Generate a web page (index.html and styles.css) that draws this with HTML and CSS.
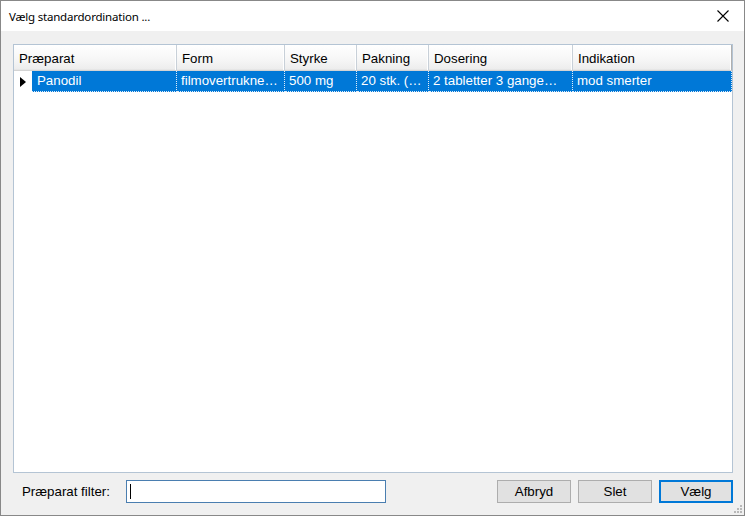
FILE: index.html
```html
<!DOCTYPE html>
<html lang="da">
<head>
<meta charset="utf-8">
<title>Vælg standardordination</title>
<link rel="stylesheet" href="styles.css">
</head>
<body>
<div class="window">
  <div class="titlebar">
    <span class="title">Vælg standardordination ...</span>
    <svg class="close" width="12" height="12" viewBox="0 0 12 12"><path d="M0.5 0.5 L11.5 11.5 M11.5 0.5 L0.5 11.5" stroke="#000" stroke-width="1.1" fill="none"/></svg>
  </div>
  <div class="body">
    <div class="grid">
      <div class="hrow">
        <div class="hcell c1">Præparat</div>
        <div class="hcell c2">Form</div>
        <div class="hcell c3">Styrke</div>
        <div class="hcell c4">Pakning</div>
        <div class="hcell c5">Dosering</div>
        <div class="hcell c6">Indikation</div>
      </div>
      <div class="drow">
        <div class="rowhead"><svg width="6" height="10" viewBox="0 0 6 10"><path d="M0 0 L6 5 L0 10 Z" fill="#000"/></svg></div>
        <div class="dcell d1">Panodil</div>
        <div class="dcell c2">filmovertrukne…</div>
        <div class="dcell c3">500 mg</div>
        <div class="dcell c4">20 stk. (…</div>
        <div class="dcell c5">2 tabletter 3 gange…</div>
        <div class="dcell c6">mod smerter</div>
      </div>
    </div>
    <div class="footer">
      <label class="flabel">Præparat filter:</label>
      <div class="input"><span class="caret"></span></div>
      <div class="spacer"></div>
      <button class="btn">Afbryd</button>
      <button class="btn">Slet</button>
      <button class="btn default">Vælg</button>
    </div>
  </div>
  <svg class="grip" width="9" height="9" viewBox="0 0 9 9">
    <rect x="6" y="0" width="2" height="2" fill="#b8b8b8"/>
    <rect x="3" y="3" width="2" height="2" fill="#b8b8b8"/>
    <rect x="6" y="3" width="2" height="2" fill="#b8b8b8"/>
    <rect x="0" y="6" width="2" height="2" fill="#b8b8b8"/>
    <rect x="3" y="6" width="2" height="2" fill="#b8b8b8"/>
    <rect x="6" y="6" width="2" height="2" fill="#b8b8b8"/>
  </svg>
</div>
</body>
</html>
```

FILE: styles.css
```css
html, body {
  margin: 0;
  padding: 0;
}
body {
  width: 745px;
  height: 516px;
  overflow: hidden;
  font-family: "Liberation Sans", Arial, sans-serif;
  font-size: 13px;
  color: #000;
}
.window {
  position: relative;
  width: 745px;
  height: 516px;
  box-sizing: border-box;
  border: 1px solid #888;
  background: #f0f0f0;
  display: flex;
  flex-direction: column;
}
.titlebar {
  height: 30px;
  background: #fff;
  display: flex;
  align-items: center;
  padding-left: 8px;
  padding-right: 15px;
  flex: none;
}
.title {
  flex: 1;
  font-family: "Noto Sans", "Open Sans", sans-serif;
  font-size: 11.5px;
  letter-spacing: -0.2px;
}
.close {
  display: block;
}
.body {
  flex: 1;
  display: flex;
  flex-direction: column;
  padding: 13px 11px 0 12px;
}
.grid {
  height: 429px;
  box-sizing: border-box;
  border: 1px solid #b4c4d4;
  background: #fff;
  flex: none;
}
.hrow {
  display: flex;
  height: 26px;
}
.hcell {
  box-sizing: border-box;
  height: 26px;
  padding-left: 5px;
  line-height: 27px;
  font-size: 13.3px;
  background: linear-gradient(#ffffff, #f6f6f6 60%, #ececec);
  border-right: 1px solid #c8d0d8;
  border-bottom: 1px solid #d4d4d4;
  box-shadow: inset -1px 0 0 #fff, inset 0 -1px 0 #e6e6e6;
  white-space: nowrap;
  overflow: hidden;
}
.c1 { width: 163px; }
.c2 { width: 108px; }
.c3 { width: 72px; }
.c4 { width: 72px; }
.c5 { width: 144px; }
.c6 { width: 159px; }
.hcell.c6 { border-right: 1px solid #b0b0b0; }
.drow {
  display: flex;
  height: 21px;
}
.rowhead {
  width: 18px;
  box-sizing: border-box;
  display: flex;
  align-items: center;
  padding-left: 6px;
  background: #fff;
}
.rowhead svg { display: block; }
.dcell {
  box-sizing: border-box;
  height: 21px;
  background: #0078d7;
  color: #fff;
  padding-left: 4px;
  line-height: 20px;
  font-size: 13.3px;
  white-space: nowrap;
  overflow: hidden;
  border-right: 1px dotted #e0ecf8;
  border-bottom: 1px dotted #e0ecf8;
}
.d1 { width: 145px; padding-left: 5px; }
.dcell.c2 { width: 108px; }
.footer {
  display: flex;
  align-items: center;
  height: 23px;
  margin-top: 7px;
}
.flabel {
  margin-left: 9px;
  width: 104px;
  flex: none;
  font-size: 13.3px;
}
.input {
  width: 260px;
  height: 23px;
  box-sizing: border-box;
  border: 1px solid #4a7eb0;
  background: #fff;
  display: flex;
  align-items: center;
  padding-left: 3px;
  flex: none;
}
.caret {
  display: block;
  width: 1px;
  height: 15px;
  background: #000;
}
.spacer { flex: 1; }
.btn {
  width: 74px;
  height: 23px;
  box-sizing: border-box;
  margin-left: 7px;
  border: 1px solid #adadad;
  background: #e1e1e1;
  font-family: "Liberation Sans", Arial, sans-serif;
  font-size: 13.3px;
  color: #000;
  padding: 0;
  flex: none;
}
.btn:first-of-type { margin-left: 0; }
.btn.default {
  border: 2px solid #0078d7;
}
.grip {
  position: absolute;
  right: 1px;
  bottom: 1px;
}
```
